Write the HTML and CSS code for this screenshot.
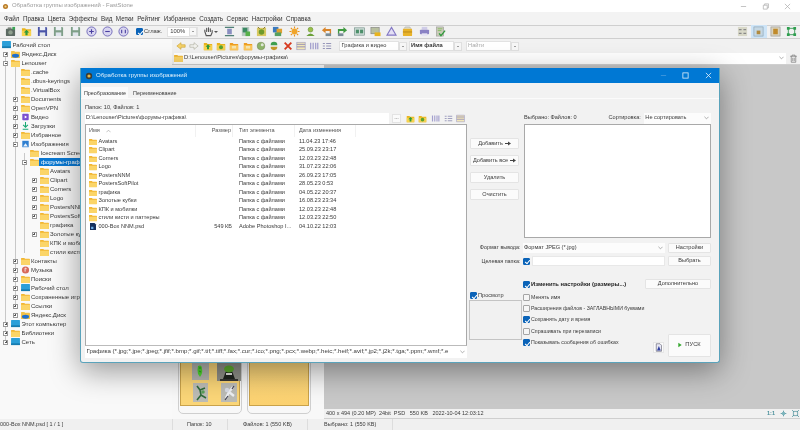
FILE: index.html
```html
<!DOCTYPE html>
<html lang="ru">
<head>
<meta charset="utf-8">
<title>FastStone</title>
<link rel="stylesheet" href="styles.css">
</head>
<body>
<svg class="defs" width="0" height="0" aria-hidden="true">
  <symbol id="folder" viewBox="0 0 10 9"><path d="M0 1.500Q0 1 .6 1H3.600L4.600 2H9.400Q10 2 10 2.600V8.400Q10 9 9.400 9H.6Q0 9 0 8.400Z" fill="#f2b632"/><path d="M0 3.200H10V8.400Q10 9 9.400 9H.6Q0 9 0 8.400Z" fill="#fbd568"/></symbol>
  <symbol id="photo" viewBox="0 0 12 12"><rect x="1" y="3" width="10" height="8" rx="1" fill="#5c6a63"/><rect x="3" y="1.500" width="4" height="2" fill="#7a8279"/><circle cx="6" cy="7" r="2.400" fill="#8fa08f"/><rect x="8" y="1" width="3" height="3" fill="#3aa655"/></symbol>
  <symbol id="fopen" viewBox="0 0 12 12"><path d="M1 2.500H4.500L5.500 3.500H11V11H1Z" fill="#e9b41d"/><path d="M1 5H11V11H1Z" fill="#f8d34d"/><path d="M6 4L9 7H7.200V10H4.800V7H3Z" fill="#2f9a3c"/></symbol>
  <symbol id="fgreen" viewBox="0 0 12 12"><path d="M1 2.500H4.500L5.500 3.500H11V11H1Z" fill="#e9b41d"/><path d="M1 5H11V11H1Z" fill="#f3cf52"/><circle cx="6" cy="7.500" r="2.400" fill="#5aa32d"/></symbol>
  <symbol id="forange" viewBox="0 0 12 12"><path d="M1 2.500H4.500L5.500 3.500H11V11H1Z" fill="#ee9e22"/><path d="M1 5H11V11H1Z" fill="#fbc75b"/><rect x="3.500" y="6" width="5" height="3" fill="#f5e5b0"/></symbol>
  <symbol id="save" viewBox="0 0 12 12"><path d="M1 1H10L11 2V11H1Z" fill="currentColor"/><rect x="3" y="1" width="6" height="3.600" fill="#eef1f6"/><rect x="3" y="7" width="6" height="4" fill="#dfe4ec"/></symbol>
  <symbol id="zin" viewBox="0 0 12 12"><circle cx="6" cy="6" r="5" fill="#d9d6f0" stroke="#6f67b8"/><path d="M3.500 6H8.500M6 3.500V8.500" stroke="#4a3fa0" stroke-width="1.200"/></symbol>
  <symbol id="zout" viewBox="0 0 12 12"><circle cx="6" cy="6" r="5" fill="#d9d6f0" stroke="#6f67b8"/><path d="M3.500 6H8.500" stroke="#4a3fa0" stroke-width="1.200"/></symbol>
  <symbol id="z11" viewBox="0 0 12 12"><circle cx="6" cy="6" r="5" fill="#d9d6f0" stroke="#6f67b8"/><path d="M4 4V8M8 4V8" stroke="#4a3fa0" stroke-width="1.200"/></symbol>
  <symbol id="hand" viewBox="0 0 12 12"><path d="M2 6V4.500M4 6V2.500M6 6V2M8 6V3M10 7V5M2 6L3.500 10.500H8.500L10 7" fill="none" stroke="#555" stroke-width="1.200" stroke-linecap="round"/></symbol>
  <symbol id="fit" viewBox="0 0 12 12"><path d="M1 1.500H11M1 10.500H11" stroke="#4f7f76" stroke-width="1.400"/><rect x="3.500" y="3" width="5" height="6" fill="#8a8fc0"/></symbol>
  <symbol id="img1" viewBox="0 0 12 12"><rect x="2" y="1" width="8" height="10" fill="#b8c8c2"/><rect x="3" y="2" width="5" height="5" fill="#3b8a63"/><rect x="6" y="6" width="5" height="5" fill="#57b04a"/></symbol>
  <symbol id="img2" viewBox="0 0 12 12"><rect x="1" y="2" width="10" height="9" fill="#d8c860"/><circle cx="6" cy="6.500" r="3" fill="#6d9a2a"/><path d="M2 1L4 3M10 1L8 3" stroke="#7a6a20"/></symbol>
  <symbol id="img3" viewBox="0 0 12 12"><rect x="1" y="1" width="6" height="6" fill="#3a7abf"/><rect x="5" y="3" width="6" height="5" fill="#e0a030"/><rect x="3" y="7" width="7" height="4" fill="#55a060"/></symbol>
  <symbol id="sun" viewBox="0 0 12 12"><circle cx="6" cy="6" r="3.200" fill="#f0a52a"/><path d="M6 .5V2.500M6 9.500V11.500M.5 6H2.500M9.500 6H11.500M2 2L3.400 3.400M8.600 8.600L10 10M2 10L3.400 8.600M8.600 3.400L10 2" stroke="#e98f1a" stroke-width="1.200"/></symbol>
  <symbol id="person" viewBox="0 0 12 12"><circle cx="6" cy="4" r="2.600" fill="#9abf4a" stroke="#5b8a2a" stroke-width=".6"/><path d="M1.500 11Q6 5.500 10.500 11Z" fill="#6ba03a"/></symbol>
  <symbol id="undo" viewBox="0 0 12 12"><path d="M9.500 9V5.500H5V8L1 4.500L5 1V3.300H11V9Z" fill="#d9852a"/><rect x="5" y="8" width="6" height="3" fill="#7a8c96"/></symbol>
  <symbol id="redo" viewBox="0 0 12 12"><path d="M2.500 9V5.500H7V8L11 4.500L7 1V3.300H1V9Z" fill="#3f9a3f"/><rect x="1" y="8" width="6" height="3" fill="#7a8c96"/></symbol>
  <symbol id="two" viewBox="0 0 12 12"><rect x=".5" y="2" width="11" height="8" fill="#cfdcd8" stroke="#6f8f86" stroke-width=".7"/><rect x="2" y="4" width="3.400" height="4" fill="#4c8f6a"/><rect x="6.600" y="4" width="3.400" height="4" fill="#4c8f6a"/></symbol>
  <symbol id="screen" viewBox="0 0 12 12"><rect x="1" y="1.500" width="9" height="7" fill="#b8c0a0" stroke="#777" stroke-width=".6"/><path d="M5 7H11.500V11H5Z" fill="#e9b41d"/></symbol>
  <symbol id="tri" viewBox="0 0 12 12"><path d="M6 1.500L11 10H1Z" fill="#e3dff5" stroke="#8277c4" stroke-width="1.200"/></symbol>
  <symbol id="brief" viewBox="0 0 12 12"><path d="M2 3L3.500 1H8.500L10 3" fill="#d8d8c8" stroke="#999" stroke-width=".5"/><rect x="1" y="3" width="10" height="8" rx="1" fill="#e9b32a"/><rect x="1" y="6" width="10" height="1" fill="#b5851a"/></symbol>
  <symbol id="print" viewBox="0 0 12 12"><rect x="3" y="1" width="6" height="3" fill="#cfcce8"/><rect x="1" y="4" width="10" height="5" rx="1" fill="#8a82c4"/><rect x="3" y="8" width="6" height="3" fill="#e6e4f4"/></symbol>
  <symbol id="docok" viewBox="0 0 12 12"><rect x="1.500" y="1" width="8" height="10" fill="#c9ccb8" stroke="#888" stroke-width=".5"/><path d="M3 3H8M3 5H7" stroke="#8b6" /><path d="M4.500 8L6.500 10.500L11 5" fill="none" stroke="#2f9a3c" stroke-width="1.500"/></symbol>
  <symbol id="vlist" viewBox="0 0 12 12"><rect x="1" y="1" width="10" height="10" fill="#d8d8c8"/><path d="M2 4H5M7 4H10M2 8H5M7 8H10" stroke="#888" stroke-width="1.200"/></symbol>
  <symbol id="vthumb" viewBox="0 0 12 12"><rect x="1" y="1" width="10" height="10" fill="#c6d8e4" stroke="#7d97a8" stroke-width=".6"/><rect x="4" y="5" width="4" height="4" fill="#b08a40"/></symbol>
  <symbol id="vfull" viewBox="0 0 12 12"><rect x="1" y="1" width="10" height="10" fill="#d9d2bd" stroke="#8a8a8a" stroke-width=".6"/><rect x="3.500" y="3" width="5" height="6" fill="#c08a2a"/></symbol>
  <symbol id="vmax" viewBox="0 0 12 12"><rect x="2.500" y="2.500" width="7" height="7" fill="none" stroke="#3d9a5a"/><path d="M1 1H4V4H1ZM8 1H11V4H8ZM1 8H4V11H1ZM8 8H11V11H8Z" fill="#2f9f4f"/></symbol>
  <symbol id="back" viewBox="0 0 12 12"><path d="M1 6L6 2V4.500H11V7.500H6V10Z" fill="#f5d26a" stroke="#c9a02a" stroke-width=".7"/></symbol>
  <symbol id="fwd" viewBox="0 0 12 12"><path d="M11 6L6 2V4.500H1V7.500H6V10Z" fill="#f2f2ee" stroke="#a8a89a" stroke-width=".7"/></symbol>
  <symbol id="globe" viewBox="0 0 12 12"><circle cx="6" cy="6" r="4.600" fill="#8fb56a" stroke="#70804f" stroke-width=".6"/><circle cx="7.500" cy="4.500" r="1.800" fill="#e0e8d8"/></symbol>
  <symbol id="sync" viewBox="0 0 12 12"><path d="M2 5A4 4 0 0 1 10 5Z" fill="#3fa04f"/><path d="M10 7A4 4 0 0 1 2 7Z" fill="#c59a2a"/></symbol>
  <symbol id="del" viewBox="0 0 12 12"><path d="M2 2L10 10M10 2L2 10" stroke="#d83a20" stroke-width="2.200"/></symbol>
  <symbol id="vdet" viewBox="0 0 12 12"><rect x="1" y="1.500" width="10" height="9" fill="#f3e8b8" stroke="#9b98c4" stroke-width=".7"/><path d="M1 4H11M1 7H11" stroke="#7d77b6" stroke-width=".9"/></symbol>
  <symbol id="vcol" viewBox="0 0 12 12"><path d="M2 2V10M5 2V10M8 2V10M10.500 2V10" stroke="#a39fce" stroke-width="1.500"/></symbol>
  <symbol id="vgrid" viewBox="0 0 12 12"><path d="M1 3H3.500M5 3H11M1 6H3.500M5 6H11M1 9H3.500M5 9H11" stroke="#8f8fb5" stroke-width="1.100"/></symbol>
  <symbol id="trash" viewBox="0 0 12 12"><path d="M1.500 3H10.500M4 3V1.500H8V3M3 3V11H9V3M5 5V9.500M7 5V9.500" fill="none" stroke="#666" stroke-width=".8"/></symbol>
  <symbol id="arrow" viewBox="0 0 10 8"><path d="M0 3H5V.5L10 4L5 7.500V5H0Z" fill="#444"/></symbol>
  <symbol id="chev" viewBox="0 0 6 4"><path d="M.5 .5L3 3L5.500 .5" fill="none" stroke="#888" stroke-width=".8"/></symbol>
  <symbol id="plusbox" viewBox="0 0 12 12"><path d="M3 1H8L10 3V11H3Z" fill="#e8e8f4" stroke="#445" stroke-width=".7"/><path d="M6.500 4L9 10H4Z" fill="#2f3fa0"/></symbol>
  <symbol id="ps" viewBox="0 0 10 10"><path d="M1 0H7L9 2V10H1Z" fill="#16305e"/><rect x="2.500" y="5" width="3" height="3" fill="#6fb0e8"/></symbol>
  <symbol id="desk" viewBox="0 0 10 9"><rect width="10" height="8" rx=".6" fill="#2b9fd8"/><rect y="6" width="10" height="2" fill="#167cb0"/></symbol>
  <symbol id="ydisk" viewBox="0 0 10 9"><path d="M0 1.500Q0 1 .6 1H3.600L4.600 2H9.400Q10 2 10 2.600V8.400Q10 9 9.400 9H.6Q0 9 0 8.400Z" fill="#f2c24a"/><ellipse cx="5" cy="6.500" rx="4" ry="2.200" fill="#1e6fd0"/></symbol>
  <symbol id="video" viewBox="0 0 10 10"><rect x="1" y="1" width="8" height="8" rx="1" fill="#7a4fd0"/><path d="M4 3L7 5L4 7Z" fill="#fff"/></symbol>
  <symbol id="down" viewBox="0 0 10 10"><path d="M5 0V6M2 3.500L5 6.500L8 3.500M1.500 9H8.500" fill="none" stroke="#19a974" stroke-width="1.300"/></symbol>
  <symbol id="imgs" viewBox="0 0 10 10"><rect x="1" y="1" width="8" height="8" fill="#2f7fd0"/><path d="M2 8L5 4L8 8Z" fill="#e8f2fb"/></symbol>
  <symbol id="music" viewBox="0 0 10 10"><circle cx="5" cy="5" r="4.500" fill="#d86a5a"/><path d="M4.500 7V2.500L6.500 3.500" fill="none" stroke="#fff"/></symbol>
  <symbol id="robot" viewBox="0 0 24 18"><rect width="24" height="18" fill="#8f8f88"/><path d="M6 16L9 8H15L18 16Z" fill="#20241f"/><ellipse cx="12" cy="6" rx="5" ry="3.500" fill="#5fae2f"/><rect x="9" y="10" width="6" height="2" fill="#e5e5df"/><path d="M3 17H21" stroke="#1a1a1a" stroke-width="1.500"/></symbol>
  <symbol id="bug" viewBox="0 0 17 17"><rect width="17" height="17" fill="#b5b5b0"/><path d="M6 3Q10 1 10 6Q11 10 8 14L6 11Q5 7 6 3Z" fill="#4ed82f"/><path d="M7 5H9M7 8L9 9" stroke="#1f7a1a" stroke-width=".7"/></symbol>
  <symbol id="lizard" viewBox="0 0 15 19"><rect width="15" height="19" fill="#bcbcb6"/><path d="M4 3L7 7L12 5M7 7L8 12M4 17L8 12L13 15" fill="none" stroke="#2f6b3a" stroke-width="1.600"/><circle cx="10" cy="9" r="1.800" fill="#5aa05a"/></symbol>
  <symbol id="robo2" viewBox="0 0 16 19"><rect width="16" height="19" fill="#bcbcb6"/><path d="M5 15L8 9L12 4M8 9L13 13" stroke="#eef0f4" stroke-width="2.400"/><circle cx="6" cy="7" r="2.200" fill="#d9dce6"/><path d="M4 17L7 13M11 6L13 3" stroke="#445" stroke-width="1.200"/></symbol>
</svg>

<div class="app">
  <header class="titlebar">
    <svg class="app-ico" viewBox="0 0 10 10"><circle cx="5" cy="5" r="3.600" fill="#b87a28"/><circle cx="5" cy="5" r="1.500" fill="#f4d68a"/></svg>
    <span class="title-text">Обработка группы изображений - FastStone</span>
    <div class="winctl winctl-main">
      <svg viewBox="0 0 8 8"><path d="M1 4H7" stroke="#bbb"/></svg>
      <svg viewBox="0 0 8 8"><path d="M1.500 2.500H6V7H1.500ZM3 2.500V1H7.500V5.500H6" fill="none" stroke="#aaa" stroke-width=".8"/></svg>
      <svg viewBox="0 0 8 8"><path d="M1 1L7 7M7 1L1 7" stroke="#aaa" stroke-width=".8"/></svg>
    </div>
  </header>
  <nav class="menubar">
    <span>Файл</span><span>Правка</span><span>Цвета</span><span>Эффекты</span><span>Вид</span><span>Метки</span><span>Рейтинг</span><span>Избранное</span><span>Создать</span><span>Сервис</span><span>Настройки</span><span>Справка</span>
  </nav>
  <div class="toolbar">
    <i class="tb"><svg><use href="#photo"/></svg></i>
    <i class="tb"><svg><use href="#fopen"/></svg></i>
    <i class="tb c-blue"><svg><use href="#save"/></svg></i>
    <i class="tb c-sage"><svg><use href="#save"/></svg></i>
    <i class="tb c-sage"><svg><use href="#save"/></svg></i>
    <i class="tb"><svg><use href="#zin"/></svg></i>
    <i class="tb"><svg><use href="#zout"/></svg></i>
    <i class="tb"><svg><use href="#z11"/></svg></i>
    <label class="smooth"><i class="cb on"></i><span>Сглаж.</span></label>
    <div class="zoomsel"><span>100%</span><b class="ddarrow"></b></div>
    <i class="tb hand"><svg><use href="#hand"/></svg></i>
    <b class="mini-drop"></b>
    <i class="tb"><svg><use href="#fit"/></svg></i>
    <i class="tb"><svg><use href="#img1"/></svg></i>
    <i class="tb"><svg><use href="#img2"/></svg></i>
    <i class="tb"><svg><use href="#img3"/></svg></i>
    <i class="tb"><svg><use href="#sun"/></svg></i>
    <i class="tb"><svg><use href="#person"/></svg></i>
    <i class="tb"><svg><use href="#undo"/></svg></i>
    <i class="tb"><svg><use href="#redo"/></svg></i>
    <i class="tb"><svg><use href="#two"/></svg></i>
    <i class="tb"><svg><use href="#screen"/></svg></i>
    <i class="tb"><svg><use href="#tri"/></svg></i>
    <i class="tb"><svg><use href="#brief"/></svg></i>
    <i class="tb"><svg><use href="#print"/></svg></i>
    <i class="tb"><svg><use href="#docok"/></svg></i>
    <div class="viewmodes">
      <i class="tb"><svg><use href="#vlist"/></svg></i>
      <i class="tb active"><svg><use href="#vthumb"/></svg></i>
      <i class="tb"><svg><use href="#vfull"/></svg></i>
      <i class="tb"><svg><use href="#vmax"/></svg></i>
    </div>
  </div>

  <div class="main">
    <aside class="tree">
      <div class="row l0"><svg class="ti"><use href="#desk"/></svg><span>Рабочий стол</span></div>
      <div class="row l1"><i class="exp"></i><svg class="ti"><use href="#ydisk"/></svg><span>Яндекс.Диск</span></div>
      <div class="row l1"><i class="exp open"></i><svg class="ti"><use href="#folder"/></svg><span>Lenouser</span></div>
      <div class="row l2"><i class="exp none"></i><svg class="ti"><use href="#folder"/></svg><span>.cache</span></div>
      <div class="row l2"><i class="exp none"></i><svg class="ti"><use href="#folder"/></svg><span>.dbus-keyrings</span></div>
      <div class="row l2"><i class="exp none"></i><svg class="ti"><use href="#folder"/></svg><span>.VirtualBox</span></div>
      <div class="row l2"><i class="exp"></i><svg class="ti"><use href="#folder"/></svg><span>Documents</span></div>
      <div class="row l2"><i class="exp"></i><svg class="ti"><use href="#folder"/></svg><span>OpenVPN</span></div>
      <div class="row l2"><i class="exp"></i><svg class="ti"><use href="#video"/></svg><span>Видео</span></div>
      <div class="row l2"><i class="exp"></i><svg class="ti"><use href="#down"/></svg><span>Загрузки</span></div>
      <div class="row l2"><i class="exp"></i><svg class="ti"><use href="#folder"/></svg><span>Избранное</span></div>
      <div class="row l2"><i class="exp open"></i><svg class="ti"><use href="#imgs"/></svg><span>Изображения</span></div>
      <div class="row l3"><i class="exp none"></i><svg class="ti"><use href="#folder"/></svg><span>Icecream Screen</span></div>
      <div class="row l3"><i class="exp open"></i><svg class="ti"><use href="#folder"/></svg><span class="selected">форумы-графика</span></div>
      <div class="row l4"><i class="exp none"></i><svg class="ti"><use href="#folder"/></svg><span>Avatars</span></div>
      <div class="row l4"><i class="exp"></i><svg class="ti"><use href="#folder"/></svg><span>Clipart</span></div>
      <div class="row l4"><i class="exp"></i><svg class="ti"><use href="#folder"/></svg><span>Corners</span></div>
      <div class="row l4"><i class="exp"></i><svg class="ti"><use href="#folder"/></svg><span>Logo</span></div>
      <div class="row l4"><i class="exp"></i><svg class="ti"><use href="#folder"/></svg><span>PostersNNM</span></div>
      <div class="row l4"><i class="exp"></i><svg class="ti"><use href="#folder"/></svg><span>PostersSoftPilot</span></div>
      <div class="row l4"><i class="exp none"></i><svg class="ti"><use href="#folder"/></svg><span>графика</span></div>
      <div class="row l4"><i class="exp"></i><svg class="ti"><use href="#folder"/></svg><span>Золотые кубки</span></div>
      <div class="row l4"><i class="exp none"></i><svg class="ti"><use href="#folder"/></svg><span>КПК и мобилки</span></div>
      <div class="row l4"><i class="exp none"></i><svg class="ti"><use href="#folder"/></svg><span>стили кисти и паттерны</span></div>
      <div class="row l2"><i class="exp"></i><svg class="ti"><use href="#folder"/></svg><span>Контакты</span></div>
      <div class="row l2"><i class="exp"></i><svg class="ti"><use href="#music"/></svg><span>Музыка</span></div>
      <div class="row l2"><i class="exp"></i><svg class="ti"><use href="#folder"/></svg><span>Поиски</span></div>
      <div class="row l2"><i class="exp"></i><svg class="ti"><use href="#desk"/></svg><span>Рабочий стол</span></div>
      <div class="row l2"><i class="exp"></i><svg class="ti"><use href="#folder"/></svg><span>Сохраненные игры</span></div>
      <div class="row l2"><i class="exp"></i><svg class="ti"><use href="#folder"/></svg><span>Ссылки</span></div>
      <div class="row l2"><i class="exp"></i><svg class="ti"><use href="#ydisk"/></svg><span>Яндекс.Диск</span></div>
      <div class="row l1"><i class="exp"></i><svg class="ti"><use href="#desk"/></svg><span>Этот компьютер</span></div>
      <div class="row l1"><i class="exp"></i><svg class="ti"><use href="#folder"/></svg><span>Библиотеки</span></div>
      <div class="row l1"><i class="exp"></i><svg class="ti"><use href="#desk"/></svg><span>Сеть</span></div>
    </aside>

    <section class="browser">
      <div class="navbar">
        <i class="nb"><svg><use href="#back"/></svg></i>
        <i class="nb"><svg><use href="#fwd"/></svg></i>
        <i class="nb"><svg><use href="#fopen"/></svg></i>
        <i class="nb"><svg><use href="#fgreen"/></svg></i>
        <i class="nb"><svg><use href="#forange"/></svg></i>
        <i class="nb"><svg><use href="#forange"/></svg></i>
        <i class="nb"><svg><use href="#globe"/></svg></i>
        <i class="nb"><svg><use href="#sync"/></svg></i>
        <i class="nb"><svg><use href="#del"/></svg></i>
        <i class="nb"><svg><use href="#vdet"/></svg></i>
        <i class="nb"><svg><use href="#vcol"/></svg></i>
        <i class="nb"><svg><use href="#vgrid"/></svg></i>
        <div class="combo combo-type"><span>Графика и видео</span></div><b class="ddarrow"></b>
        <div class="combo combo-name"><span>Имя файла</span></div><b class="ddarrow"></b>
        <div class="combo combo-find"><span>Найти</span></div><b class="ddarrow"></b>
      </div>
      <div class="pathbar">
        <div class="pathfield">
          <svg class="ti"><use href="#folder"/></svg>
          <span>D:\Lenouser\Pictures\форумы-графика\</span>
          <svg class="chev"><use href="#chev"/></svg>
        </div>
        <svg class="trash"><use href="#trash"/></svg>
      </div>
      <div class="content">
        <div class="thumbs">
          <article class="card">
            <div class="folder-face">
              <div class="thumb-grid">
                <svg class="t1"><use href="#bug"/></svg>
                <svg class="t2"><use href="#robot"/></svg>
                <svg class="t3"><use href="#lizard"/></svg>
                <svg class="t4"><use href="#robo2"/></svg>
              </div>
            </div>
          </article>
          <article class="card"><div class="folder-face plain"></div></article>
        </div>
        <div class="preview">
          <div class="preview-img"></div>
          <div class="preview-info">
            <span>400 x 494 (0.20 MP)&nbsp; 24bit&nbsp; PSD&nbsp;&nbsp; 550 KB&nbsp;&nbsp; 2022-10-04 12:03:12</span>
            <div class="pi-icons">
              <b>1:1</b>
              <svg viewBox="0 0 10 10"><path d="M5 1V9M1 5H9" stroke="#4a8f9a" stroke-width="1.200"/><circle cx="5" cy="5" r="2.600" fill="#7cb4bc"/></svg>
              <svg viewBox="0 0 10 10"><path d="M2 2H8V8H2ZM0 0L3 3M10 0L7 3M0 10L3 7M10 10L7 7" fill="none" stroke="#4a8f9a"/></svg>
            </div>
          </div>
        </div>
      </div>
    </section>
  </div>

  <footer class="status">
    <div class="s1">000-Box NNM.psd [ 1 / 1 ]</div>
    <div class="s2">Папок: 10</div>
    <div class="s3">Файлов: 1 (550 KB)</div>
    <div class="s4">Выбрано: 1 (550 KB)</div>
  </footer>

  <div class="dialog">
    <div class="dlg-title">
      <svg class="dlg-ico" viewBox="0 0 10 10"><circle cx="5" cy="5" r="4" fill="#3d3d35"/><circle cx="5" cy="5" r="2" fill="#e3b84a"/></svg>
      <span>Обработка группы изображений</span>
      <div class="winctl">
        <svg viewBox="0 0 8 8"><path d="M1 4H7" stroke="#3f97dd"/></svg>
        <svg viewBox="0 0 8 8"><rect x="1" y="1" width="6" height="6" fill="none" stroke="#e6f2fb" stroke-width=".9"/></svg>
        <svg viewBox="0 0 8 8"><path d="M1 1L7 7M7 1L1 7" stroke="#e6f2fb" stroke-width=".9"/></svg>
      </div>
    </div>
    <div class="tabs">
      <span class="tab active">Преобразование</span>
      <span class="tab">Переименование</span>
    </div>
    <div class="dlg-body">
      <div class="col-files">
        <div class="count">Папок: 10, Файлов: 1</div>
        <div class="pathrow">
          <div class="field">D:\Lenouser\Pictures\форумы-графика\</div>
          <div class="dots">...</div>
          <i class="nb"><svg><use href="#fopen"/></svg></i>
          <i class="nb"><svg><use href="#fgreen"/></svg></i>
          <i class="nb"><svg><use href="#vcol"/></svg></i>
          <i class="nb"><svg><use href="#vgrid"/></svg></i>
          <i class="nb"><svg><use href="#vdet"/></svg></i>
        </div>
        <div class="filelist">
          <div class="frow fhead"><span class="c-name">Имя<svg class="caret" viewBox="0 0 6 4"><path d="M.5 3.500L3 1L5.500 3.500" fill="none" stroke="#999" stroke-width=".7"/></svg></span><span class="c-size">Размер</span><span class="c-type">Тип элемента</span><span class="c-date">Дата изменения</span></div>
          <div class="frow"><span class="c-name"><svg class="fi"><use href="#folder"/></svg>Avatars</span><span class="c-size"></span><span class="c-type">Папка с файлами</span><span class="c-date">11.04.23 17:46</span></div>
          <div class="frow"><span class="c-name"><svg class="fi"><use href="#folder"/></svg>Clipart</span><span class="c-size"></span><span class="c-type">Папка с файлами</span><span class="c-date">25.09.23 23:17</span></div>
          <div class="frow"><span class="c-name"><svg class="fi"><use href="#folder"/></svg>Corners</span><span class="c-size"></span><span class="c-type">Папка с файлами</span><span class="c-date">12.03.23 22:48</span></div>
          <div class="frow"><span class="c-name"><svg class="fi"><use href="#folder"/></svg>Logo</span><span class="c-size"></span><span class="c-type">Папка с файлами</span><span class="c-date">31.07.23 22:06</span></div>
          <div class="frow"><span class="c-name"><svg class="fi"><use href="#folder"/></svg>PostersNNM</span><span class="c-size"></span><span class="c-type">Папка с файлами</span><span class="c-date">26.09.23 17:05</span></div>
          <div class="frow"><span class="c-name"><svg class="fi"><use href="#folder"/></svg>PostersSoftPilot</span><span class="c-size"></span><span class="c-type">Папка с файлами</span><span class="c-date">28.05.23 0:53</span></div>
          <div class="frow"><span class="c-name"><svg class="fi"><use href="#folder"/></svg>графика</span><span class="c-size"></span><span class="c-type">Папка с файлами</span><span class="c-date">04.05.22 20:37</span></div>
          <div class="frow"><span class="c-name"><svg class="fi"><use href="#folder"/></svg>Золотые кубки</span><span class="c-size"></span><span class="c-type">Папка с файлами</span><span class="c-date">16.08.23 23:34</span></div>
          <div class="frow"><span class="c-name"><svg class="fi"><use href="#folder"/></svg>КПК и мобилки</span><span class="c-size"></span><span class="c-type">Папка с файлами</span><span class="c-date">12.03.23 22:48</span></div>
          <div class="frow"><span class="c-name"><svg class="fi"><use href="#folder"/></svg>стили кисти и паттерны</span><span class="c-size"></span><span class="c-type">Папка с файлами</span><span class="c-date">12.03.23 22:50</span></div>
          <div class="frow"><span class="c-name"><svg class="fi"><use href="#ps"/></svg>000-Box NNM.psd</span><span class="c-size">549 КБ</span><span class="c-type">Adobe Photoshop I...</span><span class="c-date">04.10.22 12:03</span></div>
        </div>
        <div class="filter">
          <span>Графика (*.jpg;*.jpe;*.jpeg;*.jfif;*.bmp;*.gif;*.tif;*.tiff;*.fax;*.cur;*.ico;*.png;*.pcx;*.webp;*.heic;*.heif;*.avif;*.jp2;*.j2k;*.tga;*.ppm;*.wmf;*.e</span>
          <svg class="chev"><use href="#chev"/></svg>
        </div>
      </div>

      <div class="col-actions">
        <div class="btn">Добавить <svg class="arr"><use href="#arrow"/></svg></div>
        <div class="btn">Добавить все <svg class="arr"><use href="#arrow"/></svg></div>
        <div class="btn">Удалить</div>
        <div class="btn">Очистить</div>
      </div>

      <div class="col-selected">
        <div class="selhead">
          <span class="sel-count">Выбрано: Файлов: 0</span>
          <span class="sel-sort">Сортировка:</span>
          <div class="select sortsel"><span>Не сортировать</span><svg class="chev"><use href="#chev"/></svg></div>
        </div>
        <div class="listbox"></div>
      </div>

      <div class="lbl lbl-format">Формат вывода:</div>
      <div class="outrow outrow-format">
        <div class="select fmtsel"><span>Формат JPEG (*.jpg)</span><svg class="chev"><use href="#chev"/></svg></div>
        <div class="btn smallbtn">Настройки</div>
      </div>

      <div class="lbl lbl-target">Целевая папка:</div>
      <div class="outrow outrow-target">
        <i class="cb on"></i>
        <div class="input"></div>
        <div class="btn smallbtn">Выбрать</div>
      </div>

      <div class="previewcol">
        <label class="chk"><i class="cb on"></i><span>Просмотр</span></label>
        <div class="previewbox"></div>
      </div>

      <div class="settings">
        <label class="chk bold"><i class="cb on"></i><span>Изменить настройки (размеры...)</span></label>
        <div class="btn morebtn">Дополнительно</div>
        <div class="checks">
          <label class="chk"><i class="cb"></i><span>Менять имя</span></label>
          <label class="chk"><i class="cb"></i><span>Расширения файлов - ЗАГЛАВНЫМИ буквами</span></label>
          <label class="chk"><i class="cb on"></i><span>Сохранять дату и время</span></label>
          <label class="chk"><i class="cb"></i><span>Спрашивать при перезаписи</span></label>
          <label class="chk"><i class="cb on"></i><span>Показывать сообщения об ошибках</span></label>
        </div>
        <div class="runarea">
          <div class="helpbtn"><svg><use href="#plusbox"/></svg></div>
          <div class="btn runbtn"><svg class="play" viewBox="0 0 6 8"><path d="M.5 .5L5.500 4L.5 7.500Z" fill="#35a82f"/></svg>ПУСК</div>
        </div>
      </div>
    </div>
  </div>
</div>
</body>
</html>
```

FILE: styles.css
```css
* { box-sizing: border-box; }
html, body { margin: 0; padding: 0; }
body { background: #f0f0f0; }
.defs { position: absolute; }
.app {
  position: relative;
  width: 800px;
  height: 430px;
  overflow: hidden;
  display: flex;
  flex-direction: column;
  background: #f1f1f1;
  color: #3a3a3a;
  font-family: "Liberation Sans", Arial, sans-serif;
  font-size: 6px;
  line-height: 1;
  filter: blur(.3px);
}
i, b { font-style: normal; display: block; }
label { display: flex; align-items: center; }

/* window chrome */
.titlebar { height: 12px; flex: none; background: #fff; display: flex; align-items: center; padding-left: 2px; }
.app-ico { width: 7px; height: 7px; margin-right: 3px; }
.title-text { color: #9a9a9a; font-size: 5.950px; }
.winctl { margin-left: auto; display: flex; gap: 15px; }
.winctl svg { width: 7px; height: 7px; }
.winctl-main { padding-right: 9px; }

.menubar { height: 12.500px; flex: none; display: flex; align-items: center; gap: 3.500px; padding: 1px 0 0 4px; font-size: 6.300px; color: #333; background: #f3f3f3; }

.toolbar { height: 14.500px; flex: none; display: flex; align-items: center; padding-left: 2px; background: #f1f1f1; border-top: 1px solid #cfcfcf; border-bottom: 1px solid #cfcfcf; }
.tb { width: 16.250px; height: 13px; display: flex; align-items: center; justify-content: center; flex: none; }
.tb svg { width: 11px; height: 11px; }
.tb.active { background: #cde4f7; }
.c-blue { color: #4a55a8; }
.c-sage { color: #7f9f88; }
.smooth { margin-left: 4px; gap: 1px; font-size: 5.800px; }
.zoomsel { margin-left: 5px; width: 31px; height: 10px; display: flex; align-items: center; justify-content: space-between; background: #fff; border: 1px solid #e2e2e2; padding-left: 2px; font-size: 5.800px; }
.hand { margin-left: 2px; }
.mini-drop { width: 0; height: 0; margin-left: -3px; margin-right: 3.500px; border: 2px solid transparent; border-top-color: #555; border-bottom: 0; }
.ddarrow { width: 8px; height: 9px; flex: none; position: relative; background: #f7f7f7; border: 1px solid #e0e0e0; }
.ddarrow::after { content: ""; position: absolute; left: 2px; top: 3px; border: 1.500px solid transparent; border-top-color: #444; border-bottom: 0; }
.viewmodes { margin-left: auto; display: flex; padding-right: .5px; }

/* checkbox */
.cb { width: 7px; height: 7px; flex: none; position: relative; background: #f6f6f6; border: .5px solid #a5a5a5; border-radius: 1px; }
.cb.on { background: #0a63b8; border-color: #0a63b8; }
.cb.on::after { content: ""; position: absolute; left: 2.200px; top: .6px; width: 2.200px; height: 4px; border: solid #fff; border-width: 0 1px 1px 0; transform: rotate(40deg); }

/* main */
.main { flex: 1; min-height: 0; display: flex; }
.tree {
  width: 172px; flex: none; padding-top: 1.500px; overflow: hidden; background-color: #f9f9f9;
  font-size: 6px; color: #3a3a3a;
  background-image: linear-gradient(#c8c8c8, #c8c8c8), linear-gradient(#c8c8c8, #c8c8c8), linear-gradient(#c8c8c8, #c8c8c8);
  background-repeat: no-repeat;
  background-size: 1px 288px, 1px 243px, 1px 100px;
  background-position: 5px 16px, 15px 24px, 24px 114px;
}
.row { height: 9px; display: flex; align-items: center; white-space: nowrap; }
.row span { margin-left: 1.500px; }
.ti { width: 9px; height: 8px; flex: none; }
.l0 { padding-left: 2px; }
.l1 { padding-left: 3px; }
.l2 { padding-left: 12.500px; }
.l3 { padding-left: 22px; }
.l4 { padding-left: 31.500px; }
.exp { width: 5px; height: 5px; margin-right: 3px; flex: none; position: relative; background: #fff; border: .5px solid #999; }
.exp::before { content: ""; position: absolute; left: .5px; right: .5px; top: 1.500px; height: 1px; background: #555; }
.exp::after { content: ""; position: absolute; top: .5px; bottom: .5px; left: 1.500px; width: 1px; background: #555; }
.exp.open::after { display: none; }
.exp.none { visibility: hidden; }
.row .selected { background: #0a78d2; color: #fff; padding: 1px 2px; margin-left: 0; }

.browser { flex: 1; min-width: 0; display: flex; flex-direction: column; }
.navbar { height: 14px; flex: none; display: flex; align-items: center; padding-left: 2.500px; }
.nb { width: 13.300px; height: 11px; display: flex; align-items: center; justify-content: center; flex: none; }
.nb svg { width: 10px; height: 10px; }
.combo { height: 9.500px; display: flex; align-items: center; padding-left: 1.500px; background: #fff; border: .5px solid #e2e2e2; font-size: 5.700px; }
.combo-type { width: 60px; margin-left: 5px; }
.combo-name { width: 45px; margin-left: 1.500px; font-weight: bold; }
.combo-find { width: 45px; margin-left: 4px; color: #aaa; }
.pathbar { height: 11.500px; flex: none; display: flex; align-items: center; padding-left: 2px; border-bottom: 1px solid #cfcfcf; }
.pathfield { width: 612px; height: 10.500px; display: flex; align-items: center; gap: 1px; background: #fff; font-size: 5.800px; }
.pathfield .chev { margin-left: auto; margin-right: 2px; }
.chev { width: 5px; height: 4px; flex: none; }
.trash { width: 9px; height: 9px; margin-left: 2.500px; }

.content { flex: 1; min-height: 0; display: flex; }
.thumbs { width: 152px; flex: none; display: flex; gap: 5px; padding: 5px 0 5px 6px; background: #f8f8f8; }
.card { width: 64px; border: 1px solid #cfcfcf; border-radius: 0 0 5px 5px; padding: 2px 1px 7px; }
.folder-face { height: 100%; display: flex; align-items: flex-end; background: linear-gradient(#fff7d4, #fbd678 85%); border: .5px solid #c9a24a; }
.folder-face.plain { background: linear-gradient(#fff7d4, #f9df90 60%, #fcd271); }
.thumb-grid { display: grid; grid-template-columns: 24px 24px; grid-template-rows: 18px 19px; column-gap: 5px; row-gap: 2px; padding: 0 0 3px 7px; justify-items: center; }
.t1 { width: 17px; height: 17px; }
.t2 { width: 24px; height: 18px; }
.t3 { width: 15px; height: 19px; }
.t4 { width: 16px; height: 19px; }
.preview { flex: 1; min-width: 0; display: flex; flex-direction: column; }
.preview-img { flex: 1; background: #c8c8c8; }
.preview-info { height: 10px; flex: none; display: flex; align-items: center; padding-left: 2px; background: #f1f1f1; font-size: 5.500px; border-bottom: 1px solid #cfcfcf; }
.pi-icons { margin-left: auto; display: flex; align-items: center; gap: 5px; padding-right: 1px; color: #4a8f9a; font-size: 5.500px; }
.pi-icons svg { width: 7px; height: 7px; }

.status { height: 11px; flex: none; display: flex; align-items: center; background: #f0f0f0; font-size: 5.500px; }
.status div { height: 100%; display: flex; align-items: center; border-right: 1px solid #ddd; white-space: nowrap; }
.s1 { width: 173px; }
.s2 { width: 55px; padding-left: 14px; }
.s3 { width: 80px; padding-left: 15px; }
.s4 { width: 85px; padding-left: 16px; }

/* dialog */
.dialog {
  position: absolute; left: 80px; top: 68px; width: 640px; height: 294.500px;
  display: flex; flex-direction: column;
  background: #f2f2f2; border: 1px solid #5aa3bb; border-top: 0; border-radius: 0 0 3px 3px;
  box-shadow: 0 8px 30px rgba(0,0,0,.4);
}
.dlg-title { height: 15px; flex: none; display: flex; align-items: center; padding-left: 4px; background: #0078d4; color: #dff0fb; font-size: 6.100px; }
.dlg-ico { width: 8px; height: 8px; margin-right: 3px; }
.dialog .winctl { gap: 15.500px; padding-right: 7.500px; }
.tabs { height: 16px; flex: none; display: flex; align-items: flex-end; gap: 3px; padding-left: 1px; border-bottom: 1px solid #fbfbfb; font-size: 5.400px; }
.tab { height: 11px; padding: 4px 2px 0; }
.tab.active { background: #fafafa; }
.dlg-body {
  flex: 1; min-height: 0; padding: 4px 0 4px 4px;
  display: grid;
  grid-template-columns: 382px 52px 188px;
  column-gap: 2px;
  grid-template-rows: 135px 16px 16px 1fr;
  font-size: 5.600px;
}
.col-files { grid-row: 1 / 5; grid-column: 1; display: flex; flex-direction: column; min-height: 0; min-width: 0; }
.count { height: 10px; flex: none; display: flex; align-items: center; }
.pathrow { height: 10.500px; flex: none; display: flex; align-items: center; }
.field { width: 304px; height: 100%; display: flex; align-items: center; padding-left: 1px; background: #fff; }
.dots { width: 9px; height: 9px; margin: 0 3px; text-align: center; background: #fafafa; border: .5px solid #e3e3e3; }
.pathrow .nb { width: 12.600px; }
.pathrow .nb svg { width: 9px; height: 9px; }
.filelist { flex: 1; min-height: 0; margin-top: .5px; background: #fff; border: 1px solid #a9a9a9; border-bottom-color: #bbb; }
.frow { height: 8.500px; display: grid; grid-template-columns: 108px 37px 62px 61px; padding-left: 2px; align-items: center; white-space: nowrap; }
.fhead { height: 12px; margin-bottom: .2px; color: #555; }
.fhead span { height: 12px; display: flex; align-items: center; border-right: 1px solid #f1f1f1; }
.c-name { display: flex; align-items: center; padding-left: 1px; }
.fi { width: 8px; height: 7.500px; margin-right: 1.500px; flex: none; }
.caret { width: 5px; height: 4px; margin-left: 6px; }
.c-size { text-align: right; justify-content: flex-end; padding-right: 1px; }
.c-type { padding-left: 6px; }
.c-date { padding-left: 4px; }
.filter { height: 12px; flex: none; display: flex; align-items: center; justify-content: space-between; padding: 0 2px 0 1.500px; background: #fff; white-space: nowrap; font-size: 6.100px; overflow: hidden; }

.col-actions { grid-row: 1; grid-column: 2; padding: 35px 2px 0 1px; display: flex; flex-direction: column; gap: 6px; }
.btn { height: 11px; flex: none; display: flex; align-items: center; justify-content: center; gap: 2px; background: #fbfbfb; border: .5px solid #e4e4e4; border-radius: 1px; white-space: nowrap; }
.arr { width: 6px; height: 5px; }

.col-selected { grid-row: 1; grid-column: 3; display: flex; flex-direction: column; padding-top: 10px; }
.selhead { height: 10.500px; flex: none; display: flex; align-items: center; padding-left: 1px; }
.sel-count { width: 85px; }
.sel-sort { width: 36px; }
.select { height: 100%; display: flex; align-items: center; justify-content: space-between; padding: 0 2px 0 1px; background: #fcfcfc; }
.sortsel { width: 67px; }
.listbox { flex: 1; background: #fff; border: 1px solid #a9a9a9; margin: .5px 0 0 1px; }

.lbl { grid-column: 2; text-align: right; white-space: nowrap; padding-right: .5px; align-self: center; font-size: 5.400px; }
.lbl-format { grid-row: 2; margin-top: 4px; }
.lbl-target { grid-row: 3; margin-top: -1px; }
.outrow { grid-column: 3; display: flex; align-items: center; }
.outrow-format { grid-row: 2; padding-top: 4.500px; }
.outrow-target { grid-row: 3; padding-top: 2px; align-items: flex-start; }
.fmtsel { width: 143px; height: 10px; }
.smallbtn { width: 43px; height: 10px; margin-left: 3px; }
.input { width: 133px; height: 10px; margin-left: 2px; background: #fff; border: .5px solid #e8e8e8; }
.outrow-target .cb { margin-top: 1.500px; }

.previewcol { grid-row: 4; grid-column: 2; display: flex; flex-direction: column; padding-top: 21.500px; }
.previewcol .chk { height: 8px; padding-left: 1px; }
.previewbox { height: 40px; border: 1px solid #c4c4c4; width: 53px; background: #f1f1f1; }

.settings { grid-row: 4; grid-column: 3; display: grid; grid-template-columns: minmax(0, 1fr) 66px; grid-template-rows: 11px 1fr; padding-top: 9px; }
.chk { gap: 1px; white-space: nowrap; }
.bold { font-weight: bold; font-size: 5.800px; color: #222; }
.morebtn { height: 10px; }
.checks { display: flex; flex-direction: column; padding-top: 1.500px; grid-column: 1; font-size: 5.250px; }
.checks .chk { height: 11.400px; }
.runarea { display: flex; align-items: flex-end; justify-content: flex-end; gap: 4px; margin-left: -30px; }
.helpbtn { width: 11px; height: 11px; margin-bottom: 5px; display: flex; align-items: center; justify-content: center; background: #fbfbfb; border: .5px solid #e6e6e6; }
.helpbtn svg { width: 9px; height: 9px; }
.runbtn { width: 43px; height: 23px; margin-bottom: 1px; gap: 3px; font-size: 5.800px; }
.play { width: 4px; height: 6px; }
```
